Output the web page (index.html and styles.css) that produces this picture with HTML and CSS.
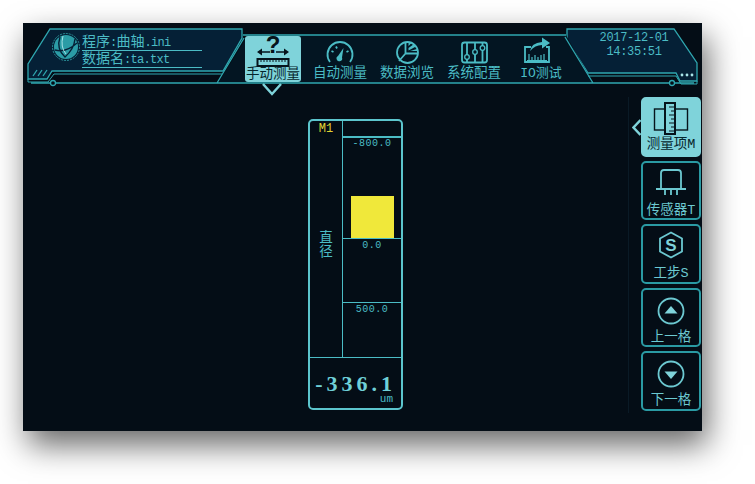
FILE: index.html
```html
<!DOCTYPE html>
<html>

<head>
    <meta charset="UTF-8">
    <title>手动测量</title>
    <link rel="stylesheet" href="styles.css">
</head>

<body>
    <div class="screen">
        <header class="topbar">
            <!-- 顶部框线 -->
            <svg class="frame" viewBox="23 23 679 75">
                <path class="panel" d="M50 29H242V38L223 71H52L47 79H28V64Z" />
                <path class="panel" d="M567 29H674L697 63V81H680L676 73H588L567 40Z" />
                <path class="nav-bg" d="M248 35H566L593 83H218Z" />
                <path class="line" d="M244 38L217 83M243 35H566M565 37L593 83M31 83H50M55 83H670M675 83H694" />
                <path class="line thin" d="M28 79V82H48L54 74H222M588 76H676L681 84H697V81" />
                <circle class="line" cx="53" cy="83" r="2.5" />
                <circle class="line" cx="672" cy="83" r="2.5" />
                <path class="line" d="M33 76L37 70M38 76L42 70M43 76L47 70" />
                <circle class="dot" cx="682" cy="75" r="1.4" />
                <circle class="dot" cx="687" cy="75" r="1.4" />
                <circle class="dot" cx="692" cy="75" r="1.4" />
                <path class="pointer" d="M263 84L272 94L281 84" />
            </svg>

            <div class="program">
                <svg class="logo" viewBox="0 0 28 28">
                    <circle cx="14" cy="14" r="13.5" fill="none" stroke="#2a8f98" stroke-dasharray="2 1" />
                    <circle cx="14" cy="14" r="12" fill="#2b9ca6" />
                    <path d="M8 4Q4 16 13 24Q22 16 23 6M3 17Q14 20 25 10" fill="none" stroke="#052036" stroke-width="1.4" />
                    <path d="M11 3Q8 14 14 21" fill="none" stroke="#a8e4e8" />
                </svg>
                <div class="program-text">
                    <div>程序<span class="latin">:</span>曲轴<span class="latin">.ini</span></div>
                    <div>数据名<span class="latin">:ta.txt</span></div>
                </div>
            </div>

            <nav class="tabs">
                <div class="tab active">
                    <svg viewBox="0 0 34 31">
                        <text x="17" y="17" text-anchor="middle" class="qmark">?</text>
                        <path d="M3 16H14M20 16H31" stroke="#06141c" stroke-width="1.6" />
                        <path d="M1 16L6 12.5V19.5ZM33 16L28 12.5V19.5Z" fill="#06141c" />
                        <rect x="1.5" y="23" width="31" height="7" fill="#7fd3da" stroke="#06141c" stroke-width="2" />
                        <path d="M5 23V26M8 23V26M11 23V26M14 23V26M17 23V26M20 23V26M23 23V26M26 23V26M29 23V26" stroke="#06141c" />
                    </svg>
                    <span>手动测量</span>
                </div>
                <div class="tab">
                    <svg viewBox="0 0 34 30">
                        <path d="M7 26A12.5 12.5 0 1 1 27 26" class="icon-line" />
                        <path d="M8.5 15L10.5 16M13 10.5L14 12.5M25.5 15L23.5 16" class="icon-line" />
                        <path d="M20.5 12L15 20A2.8 2.8 0 1 0 19 21.5Z" fill="#4bbcc5" />
                    </svg>
                    <span>自动测量</span>
                </div>
                <div class="tab">
                    <svg viewBox="0 0 34 30">
                        <circle cx="17.5" cy="16.5" r="10.5" class="icon-line" />
                        <path d="M15.5 6V17.5L9 25M15.5 17.5H27.5" class="icon-line" />
                        <path d="M19 6L22 6.5L18.5 10V8ZM24 8L26 10.5L18.5 14.5V12ZM27 13L27.8 15H20Z" fill="#4bbcc5" />
                    </svg>
                    <span>数据浏览</span>
                </div>
                <div class="tab">
                    <svg viewBox="0 0 34 30">
                        <rect x="5" y="6.5" width="25" height="20" rx="2.5" class="icon-line" />
                        <path d="M10 6.5V26.5M18 6.5V26.5M25.5 6.5V26.5" class="icon-line" />
                        <circle cx="10" cy="21" r="2.3" class="knob" />
                        <circle cx="18" cy="16" r="2.3" class="knob" />
                        <circle cx="25.5" cy="12" r="2.3" class="knob" />
                    </svg>
                    <span>系统配置</span>
                </div>
                <div class="tab">
                    <svg viewBox="0 0 34 30">
                        <path d="M7 11H1V26H25V11H22" class="icon-line" />
                        <path d="M4 18H22V25H4Z" fill="#031522" />
                        <path d="M5 18V24M8 21V24M11 19V24M14 21V24M17 19V24M20 18V24M3 24.5H23" class="icon-line thin-icon" />
                        <path d="M6 15Q7 7 18 6V1.5L26 7L18 12.5V9Q11 9 6 15Z" fill="#4bbcc5" />
                    </svg>
                    <span class="io">IO测试</span>
                </div>
            </nav>

            <div class="clock">
                <div>2017-12-01</div>
                <div>14:35:51</div>
            </div>
        </header>

        <div class="content">
            <main class="stage">
                <section class="gauge">
                    <div class="gauge-left">
                        <div class="gauge-id">M1</div>
                        <div class="gauge-name">直<br>径</div>
                    </div>
                    <div class="gauge-scale">
                        <div class="scale-head"></div>
                        <div class="scale-cell cell-a">-800.0</div>
                        <div class="scale-cell cell-b">0.0</div>
                        <div class="scale-cell cell-c">500.0</div>
                        <div class="gauge-bar"></div>
                    </div>
                    <div class="gauge-value">
                        <div class="value-num">-336.1</div>
                        <div class="value-unit">um</div>
                    </div>
                </section>
            </main>

            <aside class="side">
                <svg class="side-pointer" viewBox="0 0 9 17">
                    <path d="M8.5 1L1.5 8.5L8.5 16" />
                </svg>
                <button class="side-btn active">
                    <svg viewBox="0 0 36 34">
                        <rect x="1.5" y="5" width="33" height="21" fill="none" stroke="#06141c" stroke-width="1.4" />
                        <rect x="12" y="-1" width="10" height="31" fill="#7fd3da" stroke="#06141c" stroke-width="2" />
                        <path d="M16 3H21M18 7H21M16 11H21M18 15H21M16 19H21M18 23H21M16 27H21" stroke="#06141c" />
                    </svg>
                    <span>测量项M</span>
                </button>
                <button class="side-btn">
                    <svg viewBox="0 0 36 34">
                        <path d="M8 21V5Q8 2 11 2H25Q28 2 28 5V21M3 21H33M12 21V27M18 21V27M24 21V27" class="icon-line" />
                    </svg>
                    <span>传感器T</span>
                </button>
                <button class="side-btn">
                    <svg viewBox="0 0 36 34">
                        <path d="M18 1.5L29 7.5V20.5L18 26.5L7 20.5V7.5Z" class="icon-line" />
                        <text x="18" y="20" text-anchor="middle" class="s-mark">S</text>
                    </svg>
                    <span>工步S</span>
                </button>
                <button class="side-btn">
                    <svg viewBox="0 0 36 34">
                        <circle cx="18" cy="16" r="12.5" class="icon-line" />
                        <path d="M18 11L24.5 18.5H11.5Z" fill="#7fd3da" />
                    </svg>
                    <span>上一格</span>
                </button>
                <button class="side-btn">
                    <svg viewBox="0 0 36 34">
                        <circle cx="18" cy="16" r="12.5" class="icon-line" />
                        <path d="M18 21L24.5 13.5H11.5Z" fill="#7fd3da" />
                    </svg>
                    <span>下一格</span>
                </button>
            </aside>
        </div>
    </div>
</body>

</html>
```

FILE: styles.css
```css
* {
    box-sizing: border-box;
    padding: 0;
    margin: 0;
}

html,
body {
    height: 100%;
    background: #fff;
}

body {
    font-family: "Liberation Mono", "Noto Sans CJK SC", monospace;
    overflow: hidden;
}

.screen {
    width: 679px;
    height: 408px;
    margin: 23px 0 0 23px;
    background: #040d16;
    box-shadow: 5px 14px 30px rgba(0, 0, 0, 0.6);
    color: #4bbcc5;
}

/* 顶部 */
.topbar {
    position: relative;
    display: flex;
    height: 74px;
}

.frame {
    position: absolute;
    top: 0;
    left: 0;
    width: 679px;
    height: 75px;
}

.frame .panel {
    fill: #052036;
    stroke: #2fa7b0;
    stroke-width: 1.3;
}

.frame .nav-bg {
    fill: #031522;
}

.frame .line {
    fill: none;
    stroke: #2fa7b0;
    stroke-width: 1.3;
}

.frame .thin {
    stroke-width: 1;
}

.frame .dot {
    fill: #a8e4e8;
}

.frame .pointer {
    fill: none;
    stroke: #7fd3da;
    stroke-width: 2.5;
}

.program {
    position: relative;
    display: flex;
    align-items: flex-start;
    width: 216px;
    padding: 9px 0 0 29px;
}

.logo {
    width: 28px;
    height: 28px;
    margin-top: 1px;
    flex: none;
}

.program-text {
    width: 120px;
    margin-left: 2px;
    font-size: 14px;
    line-height: 17px;
    margin-top: 2px;
}

.program-text div {
    height: 17px;
    border-bottom: 1px solid #4bbcc5;
    white-space: nowrap;
}

.latin {
    font-size: 12px;
    letter-spacing: -0.7px;
}

.tabs {
    position: relative;
    display: flex;
    gap: 11px;
    height: 60px;
    margin: 13px 0 0 6px;
}

.tab {
    display: flex;
    flex-direction: column;
    align-items: center;
    width: 56px;
    height: 46px;
    border-radius: 3px;
    font-size: 13.5px;
    line-height: 16px;
    white-space: nowrap;
}

.tab svg {
    width: 34px;
    height: 30px;
    flex: none;
    overflow: visible;
}

.tab.active {
    background: #7fd3da;
    color: #06252c;
}

.tab.active svg {
    height: 31px;
}

.tab .io {
    font-size: 13px;
}

.icon-line {
    fill: none;
    stroke: #4bbcc5;
    stroke-width: 1.8;
}

.thin-icon {
    stroke-width: 1.2;
}

.side-btn .icon-line {
    stroke: #6cc9d1;
}

.knob {
    fill: #031522;
    stroke: #4bbcc5;
    stroke-width: 1.3;
}

.qmark {
    font: bold 24px "Liberation Sans", sans-serif;
    fill: #06141c;
}

.s-mark {
    font: bold 17px "Liberation Sans", sans-serif;
    fill: #7fd3da;
}

.clock {
    position: relative;
    width: 80px;
    margin: 9px 0 0 25px;
    font-size: 12px;
    letter-spacing: -0.3px;
    line-height: 13.5px;
    text-align: center;
}

/* 主体 */
.content {
    display: flex;
    height: 334px;
}

.stage {
    flex: 1;
    padding: 22px 0 0 285px;
}

.gauge {
    display: grid;
    grid-template-columns: 33px 1fr;
    grid-template-rows: 236px 1fr;
    width: 95px;
    height: 291px;
    border: 2px solid #5cc5cd;
    border-radius: 5px;
}

.gauge-left {
    display: flex;
    flex-direction: column;
    border-right: 1px solid #4bbcc5;
    text-align: center;
}

.gauge-id {
    padding-top: 1px;
    font-size: 12px;
    line-height: 14px;
    color: #e0d333;
}

.gauge-name {
    margin-top: 96px;
    font-size: 13.5px;
    line-height: 14px;
}

.gauge-scale {
    position: relative;
    display: grid;
    grid-template-rows: 17px 101px 64px 1fr;
    font-size: 10px;
    letter-spacing: 0.5px;
    text-align: center;
}

.scale-head {
    border-bottom: 2px solid #4bbcc5;
}

.scale-cell {
    line-height: 12px;
    border-bottom: 1px solid #4bbcc5;
}

.cell-c {
    border-bottom: 0;
}

.cell-b,
.cell-c {
    padding-top: 1px;
}

.gauge-bar {
    position: absolute;
    top: 75px;
    left: 8px;
    width: 43px;
    height: 42px;
    background: #f0e83a;
}

.gauge-value {
    grid-column: 1 / 3;
    border-top: 1px solid #4bbcc5;
    padding: 16px 5px 0 4px;
    text-align: right;
}

.value-num {
    font-family: "Liberation Serif", serif;
    font-size: 22px;
    font-weight: bold;
    letter-spacing: 4px;
    line-height: 20px;
    white-space: nowrap;
    color: #6fd0d8;
}

.value-unit {
    margin-right: 3px;
    font-size: 11px;
    line-height: 10px;
}

/* 右侧按钮 */
.side {
    position: relative;
    display: flex;
    flex-direction: column;
    gap: 4px;
    width: 74px;
    height: 316px;
    padding: 0 1px 0 12px;
    border-left: 1px solid #0a1a26;
}

.side-btn {
    display: flex;
    flex-direction: column;
    align-items: center;
    width: 60px;
    height: 59.6px;
    padding-top: 5px;
    background: transparent;
    border: 2px solid #2a9aa3;
    border-radius: 5px;
    font-family: inherit;
    font-size: 13.5px;
    line-height: 14px;
    color: #6cc9d1;
    white-space: nowrap;
}

.side-btn span {
    margin-top: 2px;
}

.side-btn svg {
    width: 36px;
    height: 34px;
    flex: none;
    overflow: visible;
}

.side-btn.active {
    background: #7fd3da;
    border-color: #7fd3da;
    color: #06252c;
}

.side-btn.active span {
    margin-top: 0;
}

.side-pointer {
    position: absolute;
    top: 22px;
    left: 3px;
    width: 9px;
    height: 17px;
}

.side-pointer path {
    fill: none;
    stroke: #7fd3da;
    stroke-width: 2.5;
}
```
